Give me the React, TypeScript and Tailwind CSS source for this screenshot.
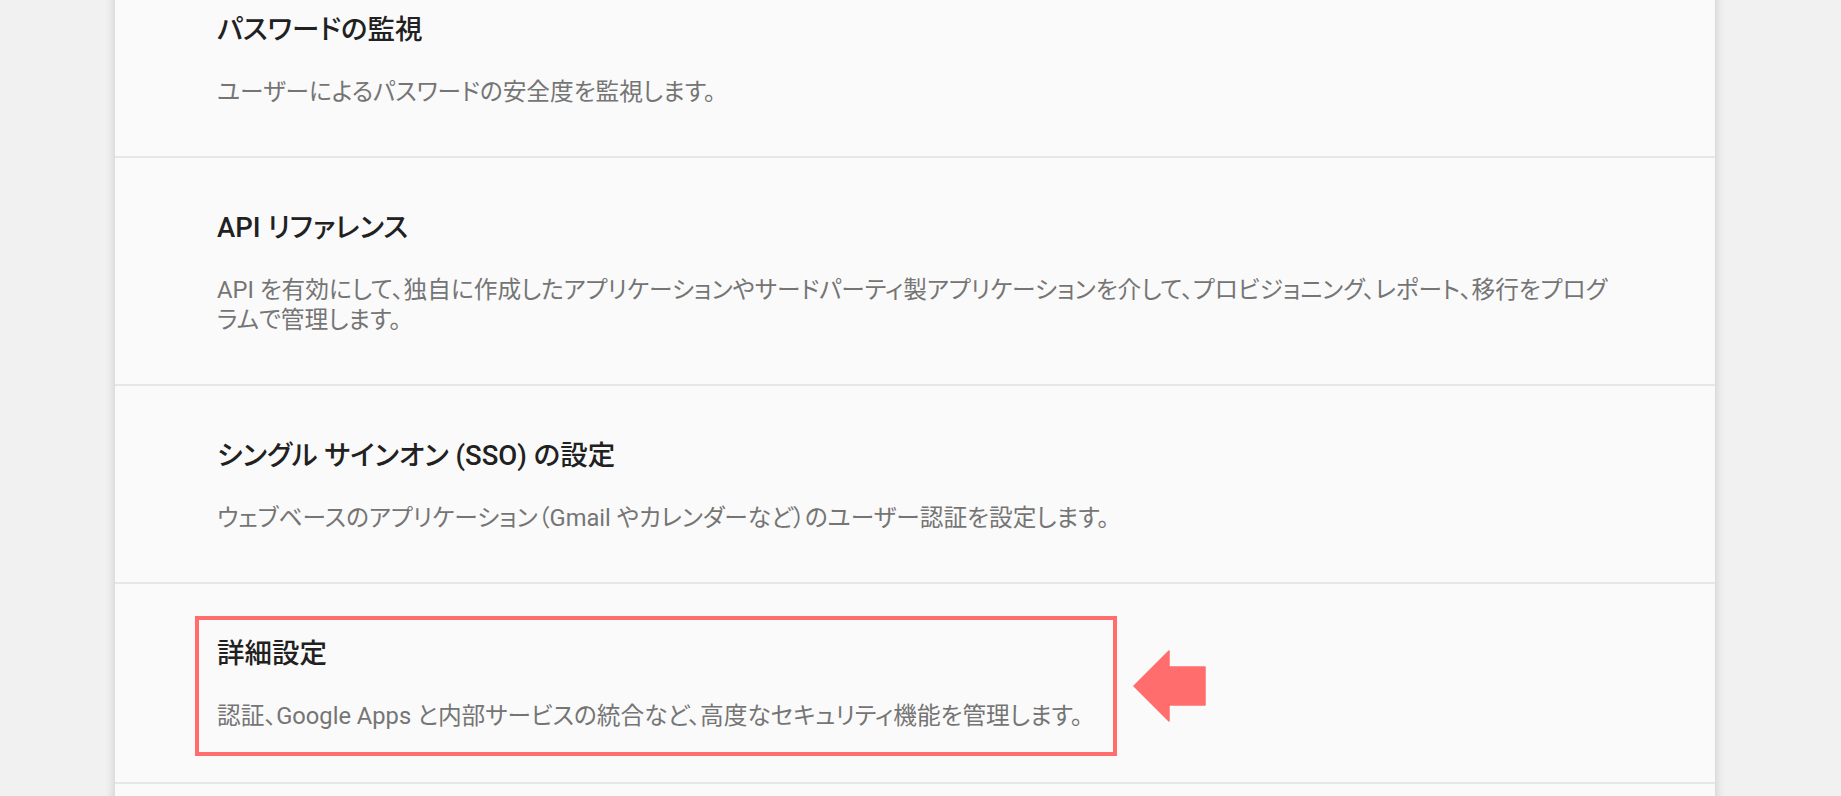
import React from "react";

interface Setting {
  title: string;
  lines: string[];
}

const settings: Setting[] = [
  {
    title: "パスワードの監視",
    lines: ["ユーザーによるパスワードの安全度を監視します。"],
  },
  {
    title: "API リファレンス",
    lines: [
      "API を有効にして、独自に作成したアプリケーションやサードパーティ製アプリケーションを介して、プロビジョニング、レポート、移行をプログ",
      "ラムで管理します。",
    ],
  },
  {
    title: "シングル サインオン (SSO) の設定",
    lines: ["ウェブベースのアプリケーション（Gmail やカレンダーなど）のユーザー認証を設定します。"],
  },
];

const SettingText = ({ setting }: { setting: Setting }) => {
  return (
    <div className="[font-feature-settings:'palt']">
      <p className="text-[27.5px] leading-[32px] font-medium text-[#212121] whitespace-nowrap">{setting.title}</p>
      <p className="mt-[31px] text-[23.7px] leading-[30px] text-[#757575] whitespace-nowrap">
        {setting.lines.map((line, index) => (
          <React.Fragment key={index}>
            {index > 0 && <br />}
            {line}
          </React.Fragment>
        ))}
      </p>
    </div>
  );
};

const Arrow = () => (
  <svg width="73" height="72" viewBox="-1 -1 73 72" className="shrink-0">
    <polygon
      points="0,35 35,0 35,16 71,16 71,54 35,54 35,70"
      fill="#ff6d6d"
      stroke="#ff6d6d"
      strokeWidth="1.5"
      strokeLinejoin="round"
    />
  </svg>
);

export default function App() {
  const advanced: Setting = {
    title: "詳細設定",
    lines: ["認証、Google Apps と内部サービスの統合など、高度なセキュリティ機能を管理します。"],
  };

  return (
    <div
      className="h-[796px] overflow-hidden bg-[#f1f1f1]"
      style={{ fontFamily: "Roboto, 'Noto Sans CJK JP', sans-serif" }}
    >
      <div className="ml-[115px] w-[1600px] -mt-[40px] bg-[#fafafa] shadow-[0_0_10px_rgba(0,0,0,0.18)]">
        {settings.map((setting, index) => (
          <div key={index} className="border-b-2 border-[#e6e6e6] pl-[102px] pr-[100px] pt-[54px] pb-[49px]">
            <SettingText setting={setting} />
          </div>
        ))}

        <div className="border-b-2 border-[#e6e6e6] pl-[80px] pt-[32px] pb-[26px]">
          <div className="flex items-center gap-[16px]">
            <div className="border-[4px] border-[#ff6d6d] pl-[18px] pr-[30px] pt-[18px] pb-[21px]">
              <SettingText setting={advanced} />
            </div>
            <Arrow />
          </div>
        </div>

        <div className="h-[120px]" />
      </div>
    </div>
  );
}
